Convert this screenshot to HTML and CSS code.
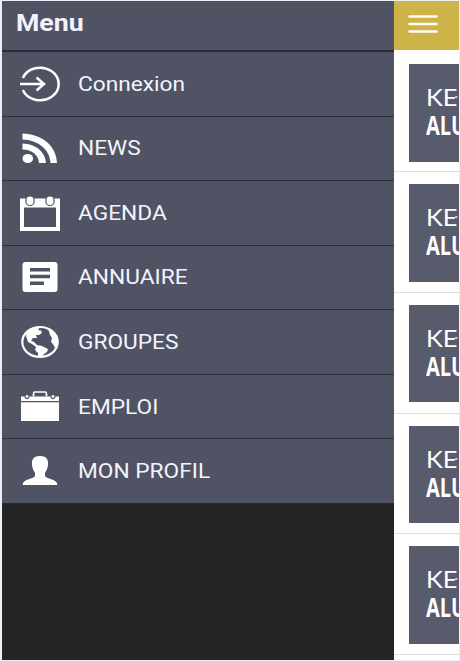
FILE: index.html
```html
<!DOCTYPE html>
<html lang="fr">
<head>
<meta charset="utf-8">
<title>Menu</title>
<link rel="stylesheet" href="styles.css">
</head>
<body>
<div class="app">
  <nav class="drawer">
    <h1 class="drawer-title"><span>Menu</span></h1>
    <ul class="menu">
      <li class="item"><svg class="icon" viewBox="0 0 44 40"><path d="M4.8 14A18.6 16.3 0 1 1 4.8 26M2 20H25M18.5 13.5L26 20L18.5 26.5" fill="none" stroke="#fff" stroke-width="2.5"/></svg><span class="label">Connexion</span></li>
      <li class="item"><svg class="icon" viewBox="0 0 44 40"><ellipse cx="9.800" cy="30.500" rx="5.300" ry="4.500"/><path d="M4.500 5.500C24 6 38.500 18 39 35H32.500C32 21.500 20 12 4.500 11.500ZM4.500 15.500C18 16 27.500 24 28 35H21C20.500 27 14 21.500 4.500 21.500Z"/></svg><span class="label">NEWS</span></li>
      <li class="item"><svg class="icon" viewBox="0 0 44 40"><path fill-rule="evenodd" d="M2 5.500H42V38H2ZM6 14.500H38V34H6Z"/><g stroke="#505364" stroke-width="1.200"><rect x="8" y="3" width="8" height="9.500" rx="3.800"/><rect x="28" y="3" width="8" height="9.500" rx="3.800"/></g></svg><span class="label">AGENDA</span></li>
      <li class="item"><svg class="icon" viewBox="0 0 44 40"><rect x="4.500" y="5" width="35" height="30" rx="3"/><path d="M12 12.700H32M12 19.500H32M12 26.200H26" stroke="#505364" stroke-width="3.400"/></svg><span class="label">ANNUAIRE</span></li>
      <li class="item"><svg class="icon" viewBox="0 0 44 40"><ellipse cx="22" cy="20" rx="17.700" ry="15" fill="none" stroke="#fff" stroke-width="2.200"/><path d="M9 9L15 5.500L22 5L20 8L23 8.500L24 11L21 13L18 13L19 16L15 16L13 18.500L16 20L19 23L24 24L30 27L29 30L26 32L24 35H20L20 31L17 28L18 25L14 22L10 20L8 14ZM27 5.500L33 8L39 15L39 23L37 26L35 22L33 20L34 16L32 13L31 9Z"/></svg><span class="label">GROUPES</span></li>
      <li class="item"><svg class="icon" viewBox="0 0 44 40"><path d="M3 9.500H6.500C6.500 13 11.500 13 11.500 9.500H32.500C32.500 13 37.500 13 37.500 9.500H41V14H3ZM3 15.200H41V34H3Z"/><ellipse cx="9" cy="9.500" rx="1.500" ry="1.400"/><ellipse cx="35" cy="9.500" rx="1.500" ry="1.400"/><path d="M15.500 9.500V6.500Q15.500 5 17 5H27Q28.500 5 28.500 6.500V9.500" fill="none" stroke="#fff" stroke-width="1.700"/></svg><span class="label">EMPLOI</span></li>
      <li class="item"><svg class="icon" viewBox="0 0 44 40"><path d="M22 5C28 5 30.500 8.500 30 13C30 17 28.500 19 27 22V25C27.500 28 39 27.500 39.500 34H4.500C5 27.500 16.500 28 17 25V22C15.500 19 14 17 14 13C13.500 8.500 16 5 22 5Z"/></svg><span class="label">MON PROFIL</span></li>
    </ul>
  </nav>
  <main class="page">
    <header class="bar"><svg class="burger" viewBox="0 0 30 18"><path d="M1.500 1.500H28.500M1.500 9H28.500M1.500 16.500H28.500"/></svg></header>
    <section class="card"><div class="logo"><span class="kedge">KE</span><span class="alumni">ALU</span></div></section>
    <section class="card"><div class="logo"><span class="kedge">KE</span><span class="alumni">ALU</span></div></section>
    <section class="card"><div class="logo"><span class="kedge">KE</span><span class="alumni">ALU</span></div></section>
    <section class="card"><div class="logo"><span class="kedge">KE</span><span class="alumni">ALU</span></div></section>
    <section class="card"><div class="logo"><span class="kedge">KE</span><span class="alumni">ALU</span></div></section>
  </main>
</div>
</body>
</html>
```

FILE: styles.css
```css
* { box-sizing: border-box; }
body { margin: 0; background: #edf1f6; font-family: Roboto, sans-serif; }
.app { display: flex; width: 460px; height: 661px; padding: 1px 1px 1px 1.5px; overflow: hidden; }
.drawer { width: 392.5px; flex: none; background: #242424; color: #f3f4fb; }
.drawer-title { margin: 0; height: 51px; padding-left: 14px; border-bottom: 2px solid #292b36; background: #505364; font-size: 23px; line-height: 45px; font-weight: 700; }
.drawer-title span, .label { display: inline-block; transform: scaleX(1.135); transform-origin: left center; white-space: nowrap; }
.drawer-title span { transform: scaleX(1.16); }
.menu { list-style: none; margin: 0; padding: 0; }
.item { display: flex; align-items: center; height: 64.550px; padding-left: 16px; border-bottom: 1.500px solid #2c2f3c; background: #505364; }
.item:last-child { border-bottom-color: #242630; }
.icon { width: 44px; height: 40px; fill: #fff; flex: none; }
.label { margin-left: 16.500px; font-size: 20px; line-height: 24px; }
.page { flex: 1; min-width: 0; background: #fff; overflow: hidden; }
.bar { height: 49px; padding: 14px 0 0 14px; background: #ceb448; }
.burger { display: block; width: 30px; height: 18px; fill: none; stroke: #fffdf4; stroke-width: 2.600; stroke-linecap: round; }
.card { height: 120.600px; padding: 12px 0 0 14.500px; border-bottom: 1px solid #dedede; }
.card:nth-of-type(1) { height: 122.400px; padding-top: 14px; }
.logo { height: 97.500px; padding: 20px 0 0 17px; overflow: hidden; background: #575b6c; color: #fff; }
.kedge, .alumni { display: block; white-space: nowrap; transform-origin: left center; }
.kedge { width: 32px; background: radial-gradient(circle at 28px 13px, #c4c8d4 0 1px, transparent 1.500px); font: 23.500px/27px Lato, sans-serif; transform: scaleX(1.080); }
.alumni { font: 700 27px/28px "Open Sans", sans-serif; transform: scaleX(.74); }
```
